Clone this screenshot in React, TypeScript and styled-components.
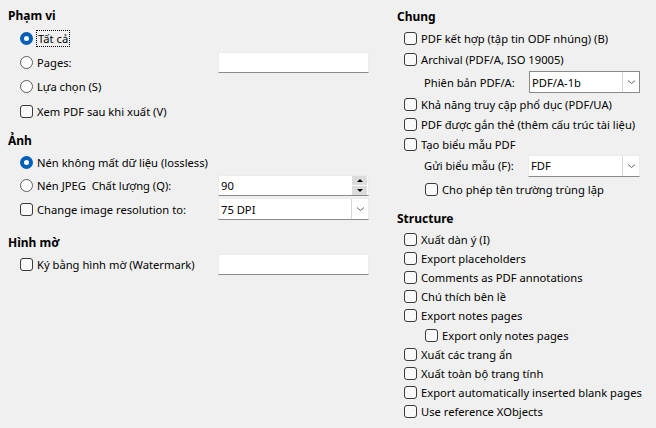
import { createGlobalStyle } from "styled-components";
import styled from "styled-components";

const GlobalStyle = createGlobalStyle`
  html, body {
    margin: 0;
    padding: 0;
    background: #f0f0f0;
  }
  body {
    font-family: "Noto Sans", "Liberation Sans", sans-serif;
    font-size: 11.2px;
    color: #000;
  }
`;

const Page = styled.div`
  width: 656px;
  height: 428px;
  box-sizing: border-box;
  padding: 6px 8px 0 8px;
  display: grid;
  grid-template-columns: 361px 250px;
  column-gap: 28px;
  background: #f0f0f0;
`;

const Column = styled.div<{ $top?: number }>`
  display: flex;
  flex-direction: column;
  min-width: 0;
  padding-top: ${(p) => p.$top ?? 0}px;
`;

const Heading = styled.div<{ $top?: number; $h?: number }>`
  font-weight: bold;
  font-size: 12px;
  height: ${(p) => p.$h ?? 20}px;
  line-height: 20px;
  margin-top: ${(p) => p.$top ?? 0}px;
`;

const Row = styled.div<{ $h?: number; $indent?: number }>`
  display: flex;
  align-items: center;
  height: ${(p) => p.$h ?? 24}px;
  padding-left: ${(p) => p.$indent ?? 12}px;
  white-space: nowrap;
`;

const FieldRow = styled.div<{ $h?: number }>`
  display: grid;
  grid-template-columns: 198px 151px;
  align-items: center;
  height: ${(p) => p.$h ?? 24}px;
  padding-left: 12px;
  white-space: nowrap;
`;

const Choice = styled.label`
  display: flex;
  align-items: center;
  gap: 4px;
`;

const Radio = styled.span<{ $on?: boolean }>`
  width: 13px;
  height: 13px;
  box-sizing: border-box;
  border-radius: 50%;
  flex: none;
  border: ${(p) => (p.$on ? "4px solid #005fb8" : "1px solid #5c5c5c")};
  background: #fff;
`;

const Check = styled.span`
  width: 13px;
  height: 13px;
  box-sizing: border-box;
  border-radius: 3px;
  flex: none;
  border: 1px solid #3a3a3a;
  background: #f9f9f9;
`;

const Focused = styled.span`
  outline: 1px dotted #000;
  outline-offset: 0;
  padding: 0 1px;
  line-height: 15px;
`;

const TextBox = styled.div`
  height: 21px;
  box-sizing: border-box;
  background: #fff;
  border: 1px solid #ececec;
  border-bottom: 1px solid #8a8a8a;
  display: flex;
  align-items: center;
  padding-left: 2px;
`;

const BoxText = styled.span`
  flex: 1;
`;

const SpinButtons = styled.div`
  width: 15px;
  height: 19px;
  display: flex;
  flex-direction: column;
  gap: 1px;
  margin-right: 1px;
`;

const SpinButton = styled.div`
  flex: 1;
  background: #dcdcdc;
  display: flex;
  align-items: center;
  justify-content: center;
`;

const Arrow = styled.span<{ $down?: boolean }>`
  width: 0;
  height: 0;
  border-left: 3px solid transparent;
  border-right: 3px solid transparent;
  ${(p) =>
    p.$down ? "border-top: 3px solid #000;" : "border-bottom: 3px solid #000;"}
`;

const Select = styled.div<{ $w?: number; $dark?: boolean }>`
  width: ${(p) => (p.$w ? `${p.$w}px` : "auto")};
  height: 22px;
  box-sizing: border-box;
  background: #fff;
  border: 1px solid ${(p) => (p.$dark ? "#8a8a8a" : "#ececec")};
  border-bottom-color: #8a8a8a;
  display: flex;
  align-items: center;
  padding-left: 2px;
  flex: none;
`;

const SelectButton = styled.div`
  width: 16px;
  align-self: stretch;
  border-left: 1px solid #d6d6d6;
  display: flex;
  align-items: center;
  justify-content: center;
`;

const Label = styled.span<{ $w: number }>`
  width: ${(p) => p.$w}px;
  flex: none;
`;

function Chevron() {
  return (
    <svg width="9" height="6" viewBox="0 0 9 6">
      <path d="M1 1.5 L4.5 4.5 L8 1.5" fill="none" stroke="#555" strokeWidth="0.9" />
    </svg>
  );
}

function CheckRow({ text, indent, h }: { text: string; indent?: number; h?: number }) {
  return (
    <Row $indent={indent} $h={h}>
      <Choice>
        <Check />
        {text}
      </Choice>
    </Row>
  );
}

const structureItems: [string, number][] = [
  ["Xuất dàn ý (I)", 7],
  ["Export placeholders", 7],
  ["Comments as PDF annotations", 7],
  ["Chú thích bên lề", 7],
  ["Export notes pages", 7],
  ["Export only notes pages", 28],
  ["Xuất các trang ẩn", 7],
  ["Xuất toàn bộ trang tính", 7],
  ["Export automatically inserted blank pages", 7],
  ["Use reference XObjects", 7],
];

export default function App() {
  return (
    <>
      <GlobalStyle />
      <Page>
        <Column>
          <Heading>Phạm vi</Heading>
          <Row>
            <Choice>
              <Radio $on />
              <Focused>Tất cả</Focused>
            </Choice>
          </Row>
          <FieldRow>
            <Choice>
              <Radio />
              Pages:
            </Choice>
            <TextBox />
          </FieldRow>
          <Row $h={25}>
            <Choice>
              <Radio />
              Lựa chọn (S)
            </Choice>
          </Row>
          <CheckRow text="Xem PDF sau khi xuất (V)" />

          <Heading $top={8}>Ảnh</Heading>
          <Row $h={23}>
            <Choice>
              <Radio $on />
              Nén không mất dữ liệu (lossless)
            </Choice>
          </Row>
          <FieldRow $h={23}>
            <Choice>
              <Radio />
              Nén JPEG&nbsp;&nbsp;Chất lượng (Q):
            </Choice>
            <TextBox>
              <BoxText>90</BoxText>
              <SpinButtons>
                <SpinButton>
                  <Arrow />
                </SpinButton>
                <SpinButton>
                  <Arrow $down />
                </SpinButton>
              </SpinButtons>
            </TextBox>
          </FieldRow>
          <FieldRow>
            <Choice>
              <Check />
              Change image resolution to:
            </Choice>
            <Select>
              <BoxText>75 DPI</BoxText>
              <SelectButton>
                <Chevron />
              </SelectButton>
            </Select>
          </FieldRow>

          <Heading $top={12}>Hình mờ</Heading>
          <FieldRow $h={23}>
            <Choice>
              <Check />
              Ký bằng hình mờ (Watermark)
            </Choice>
            <TextBox />
          </FieldRow>
        </Column>

        <Column $top={1}>
          <Heading>Chung</Heading>
          <CheckRow text="PDF kết hợp (tập tin ODF nhúng) (B)" indent={7} h={22} />
          <CheckRow text="Archival (PDF/A, ISO 19005)" indent={7} h={21} />
          <Row $indent={27} $h={24}>
            <Label $w={105}>Phiên bản PDF/A:</Label>
            <Select $w={111} $dark>
              <BoxText>PDF/A-1b</BoxText>
              <SelectButton>
                <Chevron />
              </SelectButton>
            </Select>
          </Row>
          <CheckRow text="Khả năng truy cập phổ dục (PDF/UA)" indent={7} h={21} />
          <CheckRow text="PDF được gắn thẻ (thêm cấu trúc tài liệu)" indent={7} h={19} />
          <CheckRow text="Tạo biểu mẫu PDF" indent={7} h={20} />
          <Row $indent={27} $h={23}>
            <Label $w={104}>Gửi biểu mẫu (F):</Label>
            <Select $w={112}>
              <BoxText>FDF</BoxText>
              <SelectButton>
                <Chevron />
              </SelectButton>
            </Select>
          </Row>
          <CheckRow text="Cho phép tên trường trùng lặp" indent={28} h={24} />

          <Heading $top={8} $h={21}>
            Structure
          </Heading>
          {structureItems.map(([text, indent]) => (
            <CheckRow key={text} text={text} indent={indent} h={19.1} />
          ))}
        </Column>
      </Page>
    </>
  );
}
